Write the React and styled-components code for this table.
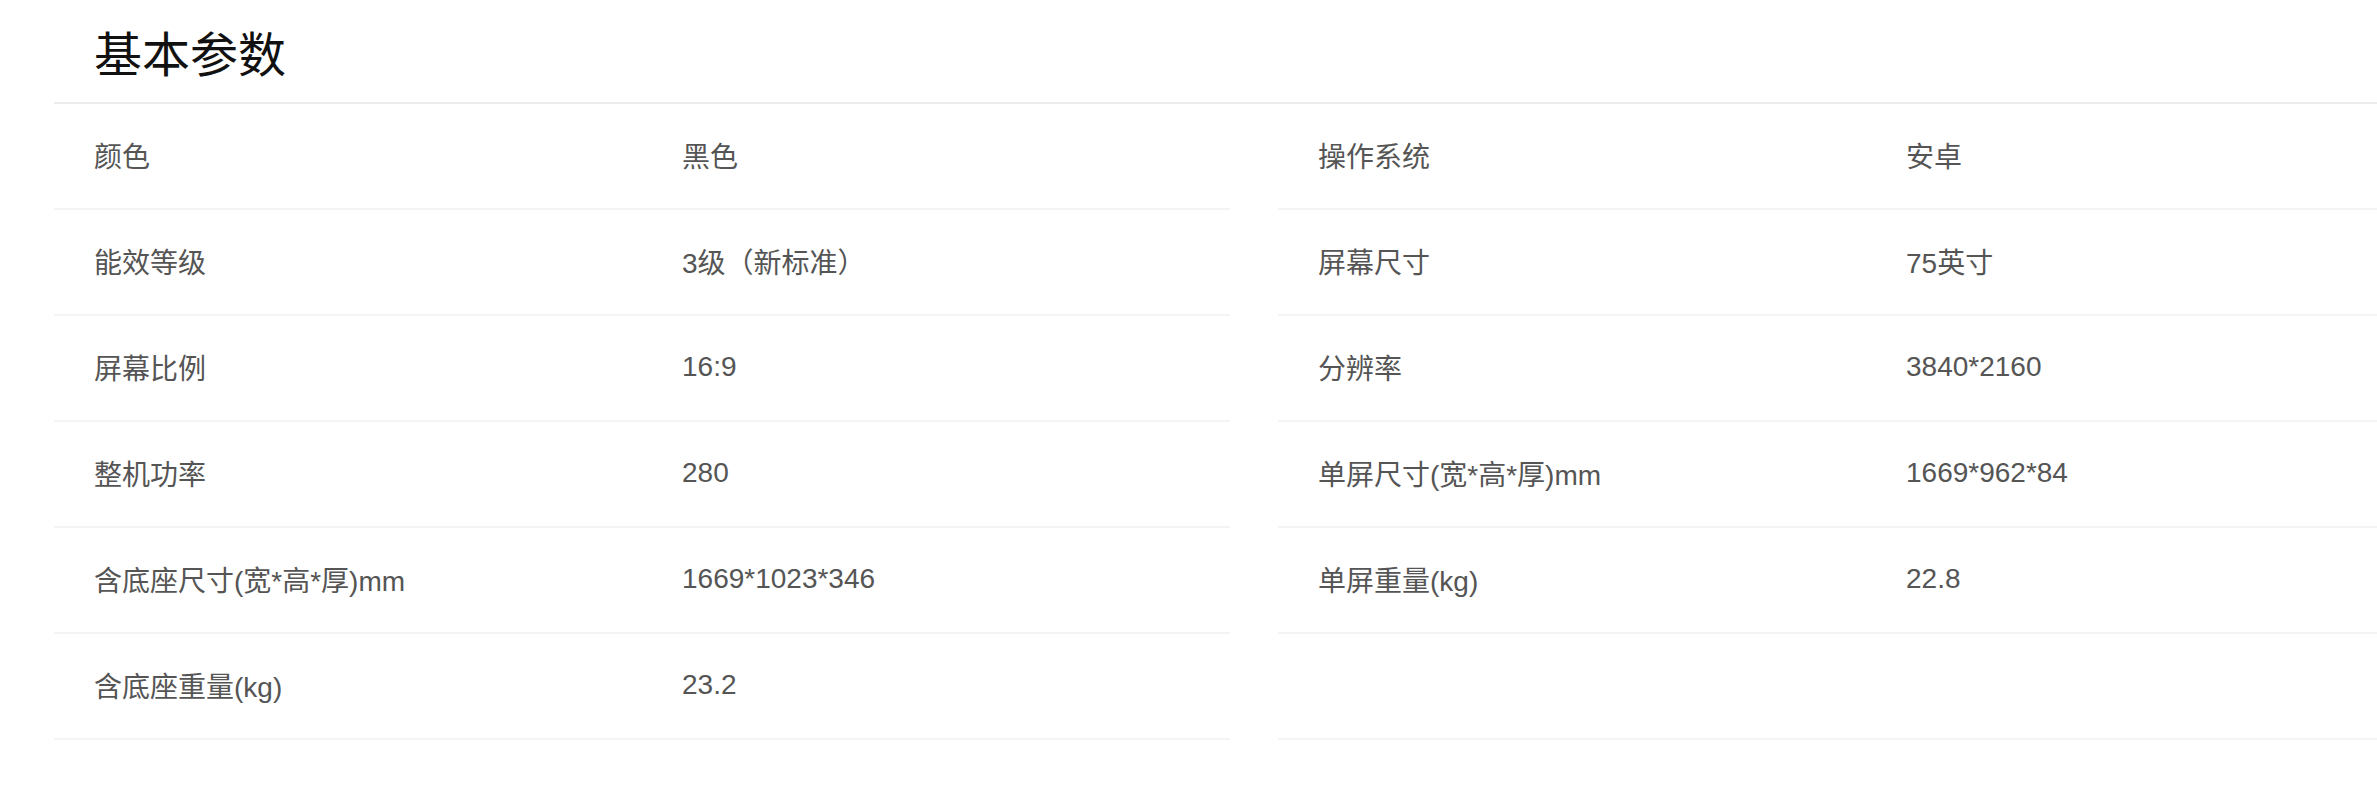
import React from 'react'
import styled, { createGlobalStyle } from 'styled-components';

const GlobalStyle = createGlobalStyle`
    html, body {
        margin: 0;
        padding: 0;
        background: #fff;
        overflow: hidden;
    }
    body {
        font-family: "Liberation Sans", "Noto Sans CJK SC", sans-serif;
    }
`;

const Page = styled.section`
    width: 2454px;
    padding-left: 54px;
    box-sizing: border-box;
`;

const Header = styled.header`
    height: 92px;
    padding: 10px 0 0 40px;
    border-bottom: 2px solid #ececec;
    display: flex;
    align-items: center;
`;

const Title = styled.h2`
    margin: 0;
    font-size: 48px;
    font-weight: 400;
    color: #111;
    line-height: 1;
`;

const Table = styled.section`
    display: grid;
    grid-template-columns: 1176px 1176px;
    column-gap: 48px;
`;

const Row = styled.div`
    display: grid;
    grid-template-columns: 1fr 1fr;
    height: 104px;
    border-bottom: 2px solid #f4f4f4;
`;

const Cell = styled.div`
    display: flex;
    align-items: center;
    padding: 0 0 2px 40px;
    font-size: 28px;
    color: #555;
    white-space: nowrap;
`;

const specs = [
    ['颜色', '黑色'],
    ['操作系统', '安卓'],
    ['能效等级', '3级（新标准）'],
    ['屏幕尺寸', '75英寸'],
    ['屏幕比例', '16:9'],
    ['分辨率', '3840*2160'],
    ['整机功率', '280'],
    ['单屏尺寸(宽*高*厚)mm', '1669*962*84'],
    ['含底座尺寸(宽*高*厚)mm', '1669*1023*346'],
    ['单屏重量(kg)', '22.8'],
    ['含底座重量(kg)', '23.2'],
    ['', ''],
];

const App = () => {
    return(
        <>
            <GlobalStyle />
            <Page>
                <Header>
                    <Title>基本参数</Title>
                </Header>

                <Table>
                    {specs.map(([name, value], i) => (
                        <Row key={i}>
                            <Cell>{name}</Cell>
                            <Cell>{value}</Cell>
                        </Row>
                    ))}
                </Table>
            </Page>
        </>
    );
}

export default App
